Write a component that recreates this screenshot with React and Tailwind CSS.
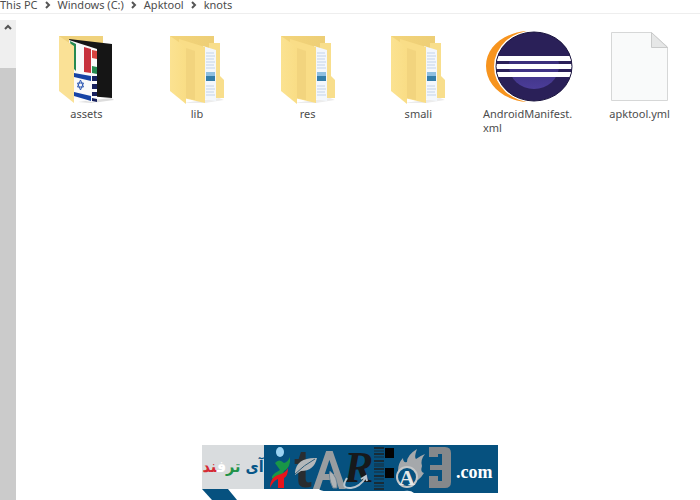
import React from 'react';

function Chevron() {
  return (
    <svg width="6" height="8" viewBox="0 0 6 8" className="mx-[7px] shrink-0" aria-hidden="true">
      <path d="M1 1 L4 4 L1 7" fill="none" stroke="#555" strokeWidth="2" />
    </svg>
  );
}

function FolderIcon() {
  return (
    <svg width="56" height="74" viewBox="0 0 56 74" aria-hidden="true">
      <defs>
        <linearGradient id="back" x1="0" y1="0" x2="1" y2="0">
          <stop offset="0" stopColor="#f3d47a" />
          <stop offset="1" stopColor="#edce76" />
        </linearGradient>
        <linearGradient id="front" x1="0" y1="0" x2="1" y2="0">
          <stop offset="0" stopColor="#fbe291" />
          <stop offset="1" stopColor="#f9dd85" />
        </linearGradient>
      </defs>
      <path d="M14 73 L50 68 L55 70 L36 73Z" fill="#ececec" />
      <path d="M1 6 H45 V60 H1Z" fill="url(#back)" />
      <path d="M40 13 H51 V46 L55 50 V68 H40Z" fill="#f8de8c" />
      <path d="M34 16 L47 20 V71 L34 69Z" fill="#f3f7fc" />
      <path d="M37 23h8M37 26h9M37 29h8M37 32h9M37 35h8M37 38h9M37 56h8M37 59h9M37 62h8M37 65h9" stroke="#c3d3e8" />
      <path d="M37 42h9v4h-9z" fill="#8fbfe0" />
      <path d="M37 46h9v5h-9z" fill="#347da8" />
      <path d="M10 9 L36 17 V73 L10 67Z" fill="#f9dd87" />
      <path d="M17 18 L26 21 V70 L17 68Z" fill="#edcf78" opacity=".6" />
      <path d="M1 6 L17 17 V74 L1 61Z" fill="url(#front)" />
    </svg>
  );
}

function AssetsIcon() {
  return (
    <svg width="56" height="74" viewBox="0 0 56 74" aria-hidden="true">
      <path d="M20 72 L53 68 L56 70 L34 73Z" fill="#ddd" />
      <path d="M1 6 H45 V50 H1Z" fill="#f0d27c" />
      <path d="M11 9 L54 14 V68 L30 66Z" fill="#151515" />
      <path d="M11 10 L39 19 V73 L16 69Z" fill="#fafafa" />
      <path d="M12 11 L18 14 V41 L15 38Z" fill="#278a50" />
      <path d="M26 17 L33 19 V43 L26 42Z" fill="#c7313c" />
      <path d="M34 20 L39 21 V29 L34 28Z" fill="#d7433f" />
      <path d="M34 36 L39 37 V44 L34 43Z" fill="#278a50" />
      <path d="M16 43 L33 46 V51 L16 47Z M16 62 L33 66 V71 L16 66Z" fill="#1643a5" />
      <path d="M34 46h5v5h-5zM34 54h5v5h-5zM34 62h5v4h-5zM34 68l5 1v3l-5-1z" fill="#17205d" />
      <path d="M22.500 50 L25.500 57 H19.500Z M22.500 60 L19.500 53 H25.500Z" fill="none" stroke="#315bb4" />
      <path d="M1 6 L16 16 V73 L1 61Z" fill="#fae196" />
    </svg>
  );
}

function EclipseIcon() {
  return (
    <svg width="88" height="74" viewBox="0 0 88 74" aria-hidden="true">
      <defs>
        <linearGradient id="globe" x1="0" y1="0" x2="0" y2="1">
          <stop offset="0" stopColor="#2e2368" />
          <stop offset="1" stopColor="#4b3d98" />
        </linearGradient>
        <clipPath id="disc"><ellipse cx="49" cy="36.500" rx="38" ry="34" /></clipPath>
      </defs>
      <path d="M42 1 C17 3 1 18 1 36 C1 54 17 70 42 72 C24 65 14 53 14 37 C14 20 24 7 42 1Z" fill="#f7941e" />
      <ellipse cx="49" cy="36.500" rx="40" ry="36" fill="#fff" />
      <ellipse cx="49" cy="36.500" rx="38" ry="34.500" fill="#2a2058" />
      <ellipse cx="49" cy="36" rx="25" ry="23" fill="url(#globe)" />
      <path d="M10 0 H88 V26 H10Z" fill="#2a2058" clipPath="url(#disc)" />
      <g clipPath="url(#disc)" fill="#fff">
        <rect x="8" y="26" width="80" height="5" />
        <rect x="8" y="34" width="80" height="5" />
        <rect x="8" y="42" width="80" height="5" />
      </g>
      <ellipse cx="49" cy="36.500" rx="38" ry="34.500" fill="none" stroke="#1d1740" />
    </svg>
  );
}

function DocumentIcon() {
  return (
    <svg width="60" height="74" viewBox="0 0 60 74" aria-hidden="true">
      <path d="M1.500 2.500 H41 L57.500 17 V70.500 H1.500Z" fill="#f9fafa" stroke="#d6d7d7" />
      <path d="M41.500 2.500 V17.500 H57.500Z" fill="#e6e7e7" stroke="#c9caca" />
    </svg>
  );
}

const files = [
  { name: 'assets', Icon: AssetsIcon },
  { name: 'lib', Icon: FolderIcon },
  { name: 'res', Icon: FolderIcon },
  { name: 'smali', Icon: FolderIcon },
  { name: 'AndroidManifest', ext: 'xml', Icon: EclipseIcon },
  { name: 'apktool.yml', Icon: DocumentIcon },
];

function Emblem() {
  return (
    <svg width="234" height="48" viewBox="0 0 234 48" role="img" aria-label="iTarfand.com">
      <path d="M0 0 H234 V48 H150 Q147 45 140 46 H62 Q57 46 55 44 H0Z" fill="#06517f" />
      <ellipse cx="16" cy="7" rx="4" ry="5" fill="#9cd4f3" />
      <path d="M11 18 Q15 13 20 18 Q24 17 26 12 Q27 22 20 26 L18 31 L9 34 Q6 32 11 28 L16 25Z" fill="#199647" />
      <path d="M6 43 Q6 31 17 29 Q22 27 24 23 Q24 31 20 33 V43 H14 V34 Q9 36 6 43Z" fill="#e8141c" />
      <text x="30" y="42" fontSize="54" className="font-['Liberation_Sans'] font-bold" fill="#292d30">t</text>
      <path d="M31 27 Q33 12 53 13 Q50 26 37 26 L31 30Z" fill="#b5b8ba" />
      <path d="M31 29 Q40 20 51 14" fill="none" stroke="#315e79" />
      <text x="50" y="43" fontSize="50" className="font-['Liberation_Sans_Narrow','DejaVu_Sans_Condensed']" fill="#999da0" stroke="#999da0" strokeWidth="2">A</text>
      <path d="M69 43 Q64 33 66 26 Q74 32 73 43Z" fill="#b0b3b5" stroke="#6c8495" strokeWidth="1" />
      <text x="80" y="37" fontSize="44" className="font-['Liberation_Serif'] font-bold italic" fill="#17191b">R</text>
      <path d="M83 33 Q76 44 87 43 Q96 42 102 32 M97 34 L102 31 L103 36" fill="none" stroke="#b9c6cf" strokeWidth="2" />
      <path d="M110 3h10M110 9h10M110 16h10M110 24h10M110 31h10M110 38h10M110 44h10" stroke="#182c38" strokeWidth="2" />
      <path d="M110 6h10M110 12h10M110 19h10M110 21h10M110 27h10M110 34h10M110 41h10" stroke="#182c38" strokeWidth="1" />
      <path d="M121 3h9v10h-9zM121 23h9v10h-9z" fill="#030303" />
      <path d="M134 26 Q134 18 139 13 Q139 18 143 17 Q143 10 153 4 Q150 12 152 14 Q156 11 161 9 Q156 15 158 21 Q156 27 160 28 Q157 33 154 35Z" fill="#a5a8ab" />
      <circle cx="143" cy="32" r="10" fill="#06517f" stroke="#c5c7c8" strokeWidth="2" />
      <text x="135" y="40" fontSize="22" className="font-['Liberation_Serif'] font-bold" fill="#e7e8e8">A</text>
      <path d="M165 2 H181 Q187 2 187 8 V37 Q187 43 181 43 H165 V31 H174 V36 H178 V25 H166 V20 H178 V9 H174 V12 H165Z" fill="#85888b" />
      <text x="192" y="33" fontSize="18" className="font-['Liberation_Serif'] font-bold" fill="#fff">.com</text>
    </svg>
  );
}

export default function App() {
  return (
    <main className="flex h-screen flex-col bg-white font-['Noto_Sans',sans-serif] text-[11px] text-[#4c4c4c]">
      <nav aria-label="Location" className="flex h-[14px] shrink-0 items-center border-b border-[#eee] pb-[3px] leading-[14px]">
        <a href="#pc">This PC</a><Chevron />
        <a href="#c">Windows (C:)</a><Chevron />
        <a href="#apktool">Apktool</a><Chevron />
        <a href="#knots">knots</a>
      </nav>
      <div className="flex min-h-0 grow">
        <aside className="mt-[6px] flex w-[16px] shrink-0 flex-col bg-[#efefef]">
          <button aria-label="Scroll up" className="flex h-[48px] justify-center pt-[4px]">
            <svg width="8" height="7" viewBox="0 0 8 7"><path d="M1 5 L4 2 L7 5" fill="none" stroke="#555" strokeWidth="2" /></svg>
          </button>
          <div className="grow bg-[#cbcbcb]" />
        </aside>
        <section className="flex min-w-0 grow flex-col justify-between pl-[15px] pr-[5px]">
          <ul className="grid grid-cols-6 pt-[16px]">
            {files.map(({ name, ext, Icon }) => (
              <li key={name} className="flex flex-col items-center">
                <Icon />
                {ext ? (
                  <span className="mt-[3px] w-[92px] text-left leading-[14px]">{name}.<wbr />{ext}</span>
                ) : (
                  <span className="mt-[3px] w-[92px] text-center leading-[14px]">{name}</span>
                )}
              </li>
            ))}
          </ul>
          <footer className="mr-[26px] flex items-start self-center">
            <div>
              <p lang="fa" dir="rtl" className="flex h-[44px] w-[62px] items-center justify-center bg-[#d9dcde] font-['DejaVu_Sans_Condensed','DejaVu_Sans',sans-serif] text-[16px] font-bold">
                <span className="whitespace-nowrap"><span className="text-[#075688]">آی </span><span className="text-[#229348]">تر</span><span className="text-white">ف</span><span className="text-[#d52b35]">ند</span></span>
              </p>
              <svg width="36" height="11" viewBox="0 0 36 11" className="block" aria-hidden="true"><path d="M0 0 H26 L35 11 H10Z" fill="#06517f" /></svg>
            </div>
            <Emblem />
          </footer>
        </section>
      </div>
    </main>
  );
}
